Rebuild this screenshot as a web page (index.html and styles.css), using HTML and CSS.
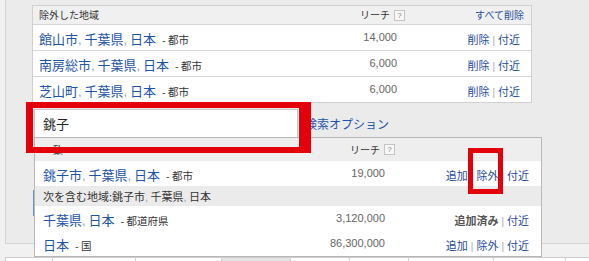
FILE: index.html
```html
<!DOCTYPE html>
<html lang="ja">
<head>
<meta charset="utf-8">
<title>除外した地域</title>
<link rel="stylesheet" href="styles.css">
</head>
<body>
<div class="page">
  <div class="panel">
    <div class="excl">
      <div class="row head">
        <div class="c-name">除外した地域</div>
        <div class="c-reach">リーチ<span class="help">?</span></div>
        <div class="c-act"><a class="link">すべて削除</a></div>
      </div>
      <div class="row item">
        <div class="c-name"><a class="place">館山市<span class="comma">,</span> 千葉県<span class="comma">,</span> 日本</a><span class="type">- 都市</span></div>
        <div class="c-reach num">14,000</div>
        <div class="c-act"><a class="link">削除</a><span class="sep">|</span><a class="link">付近</a></div>
      </div>
      <div class="row item">
        <div class="c-name"><a class="place">南房総市<span class="comma">,</span> 千葉県<span class="comma">,</span> 日本</a><span class="type">- 都市</span></div>
        <div class="c-reach num">6,000</div>
        <div class="c-act"><a class="link">削除</a><span class="sep">|</span><a class="link">付近</a></div>
      </div>
      <div class="row item">
        <div class="c-name"><a class="place">芝山町<span class="comma">,</span> 千葉県<span class="comma">,</span> 日本</a><span class="type">- 都市</span></div>
        <div class="c-reach num">6,000</div>
        <div class="c-act"><a class="link">削除</a><span class="sep">|</span><a class="link">付近</a></div>
      </div>
    </div>
    <div class="search">
      <div class="input">銚子</div>
      <a class="opt">検索オプション</a>
    </div>
    <div class="focus-line"></div>
  </div>
  <div class="tabs">
    <div class="tab w1"></div>
    <div class="tab w2"></div>
    <div class="tab w3"></div>
    <div class="tab w4 sel"></div>
    <div class="tab w5"></div>
    <div class="tab w6"></div>
    <div class="tab w7"></div>
    <div class="tab w8"></div>
    <div class="tab w9"></div>
  </div>

  <div class="dropdown">
    <div class="drow dhead">
      <div class="d-name">一致</div>
      <div class="d-reach">リーチ<span class="help">?</span></div>
      <div class="d-act"></div>
    </div>
    <div class="drow r1">
      <div class="d-name"><a class="place">銚子市<span class="comma">,</span> 千葉県<span class="comma">,</span> 日本</a><span class="type">- 都市</span></div>
      <div class="d-reach num">19,000</div>
      <div class="d-act"><a class="link">追加</a><span class="sep">|</span><a class="link">除外</a><span class="sep">|</span><a class="link">付近</a></div>
    </div>
    <div class="band">次を含む地域:銚子市<span class="comma">,</span> 千葉県<span class="comma">,</span> 日本</div>
    <div class="drow r2">
      <div class="d-name"><a class="place">千葉県<span class="comma">,</span> 日本</a><span class="type">- 都道府県</span></div>
      <div class="d-reach num">3,120,000</div>
      <div class="d-act"><span class="done">追加済み</span><span class="sep">|</span><a class="link">付近</a></div>
    </div>
    <div class="drow r3">
      <div class="d-name"><a class="place">日本</a><span class="type">- 国</span></div>
      <div class="d-reach num">86,300,000</div>
      <div class="d-act"><a class="link">追加</a><span class="sep">|</span><a class="link">除外</a><span class="sep">|</span><a class="link">付近</a></div>
    </div>
  </div>

  <div class="mark mark-input"></div>
  <div class="mark mark-exclude"></div>
</div>
</body>
</html>
```

FILE: styles.css
```css
html, body {
  margin: 0;
  padding: 0;
}
body {
  background: #f1f1f1;
  font-family: "Noto Sans CJK JP", "Liberation Sans", sans-serif;
  color: #333;
}
.page {
  position: relative;
  width: 589px;
  height: 261px;
  overflow: hidden;
}
.panel {
  margin-left: 5px;
  height: 244px;
  box-sizing: border-box;
  border-left: 1px solid #d5d5d5;
  border-bottom: 1px solid #d5d5d5;
  background: #ebebeb;
  padding: 5px 0 0 26px;
}
.excl {
  width: 500px;
  box-sizing: border-box;
  border: 1px solid #d0d0d0;
  background: #fff;
}
.row {
  display: grid;
  grid-template-columns: 1fr 100px 126px;
  align-items: center;
  line-height: 1.2;
}
.head {
  height: 18px;
  background: #f0f0f0;
  font-size: 10px;
  color: #333;
}
.item {
  height: 25px;
  border-top: 1px solid #d6d6d6;
}
.c-name {
  padding-left: 6px;
  white-space: nowrap;
}
.c-reach {
  display: flex;
  justify-content: flex-end;
  align-items: center;
}
.num {
  font-family: "Liberation Sans", sans-serif;
  font-size: 11px;
  color: #666;
}
.item .c-reach {
  padding-right: 8px;
}
.help {
  display: inline-block;
  box-sizing: border-box;
  width: 11px;
  height: 11px;
  margin-left: 4px;
  border: 1px solid #c4c4c4;
  background: #f7f7f7;
  font-family: "Liberation Sans", sans-serif;
  font-size: 8px;
  line-height: 9px;
  text-align: center;
  color: #888;
}
.c-act {
  text-align: right;
  white-space: nowrap;
}
.head .c-act {
  padding-right: 7px;
}
.head .c-act .link {
  font-size: 10px;
}
.item .c-act {
  padding-right: 11px;
}
.link {
  color: #1f4c9c;
  font-size: 11px;
  text-decoration: none;
}
.sep {
  color: #aaa;
  font-family: "Liberation Sans", sans-serif;
  font-size: 10px;
  margin: 0 3px;
}
.place {
  color: #1f55a8;
  font-size: 13px;
  text-decoration: none;
}
.comma {
  color: #8da2c8;
  font-family: "Liberation Sans", sans-serif;
}
.type {
  margin-left: 6px;
  font-size: 10.5px;
  color: #333;
}

.search {
  display: flex;
  align-items: center;
  margin-top: 6px;
}
.input {
  box-sizing: border-box;
  width: 264px;
  height: 29px;
  margin-left: 2px;
  border: 1px solid #c8c8c8;
  background: #fff;
  padding-left: 8px;
  font-size: 13px;
  line-height: 27px;
  color: #222;
}
.opt {
  margin-left: 7px;
  font-size: 12px;
  color: #1f55a8;
  text-decoration: none;
}
.focus-line {
  margin-top: 52px;
  margin-left: 1px;
  width: 0;
  height: 26px;
  border-left: 2px solid #6a8cd0;
}

.tabs {
  display: flex;
  margin-top: 13px;
  margin-left: 5px;
  height: 20px;
  border-top: 1px solid #cccccc;
  border-left: 1px solid #cccccc;
}
.tab {
  flex: none;
  box-sizing: border-box;
  height: 100%;
  background: #fff;
  border-right: 1px solid #d2d2d2;
}
.tab.sel { background: #e4e4e4; }
.w1 { width: 47px; }
.w2 { width: 83px; }
.w3 { width: 86px; }
.w4 { width: 69px; }
.w5 { width: 59px; }
.w6 { width: 59px; }
.w7 { width: 85px; }
.w8 { width: 72px; }
.w9 { width: 40px; border-right: none; }

.dropdown {
  position: absolute;
  left: 34px;
  top: 137px;
  width: 508px;
  height: 120px;
  box-sizing: border-box;
  border: 1px solid #b8b8b8;
  background: #fff;
}
.drow {
  display: grid;
  grid-template-columns: 1fr 140px 146px;
  align-items: center;
  line-height: 1.2;
}
.dhead {
  height: 23px;
  background: #eeeeee;
  font-size: 10px;
  color: #333;
}
.r1 { height: 25px; }
.r2 { height: 26px; }
.r3 { height: 24px; }
.d-name {
  padding-left: 8px;
  white-space: nowrap;
}
.d-reach {
  display: flex;
  justify-content: flex-end;
  align-items: center;
}
.drow .num {
  padding-right: 10px;
}
.d-act {
  text-align: right;
  padding-right: 12px;
  white-space: nowrap;
}
.done {
  font-size: 11px;
  font-weight: bold;
  color: #555;
}
.band {
  height: 20px;
  box-sizing: border-box;
  background: #ebebeb;
  padding-left: 8px;
  font-size: 11px;
  line-height: 20px;
  color: #333;
  white-space: nowrap;
}

.mark {
  position: absolute;
  box-sizing: border-box;
  border-style: solid;
  border-color: #e3000b;
}
.mark-input {
  left: 26px;
  top: 102px;
  width: 285px;
  height: 51px;
  border-width: 6px 12px 6px 7px;
}
.mark-exclude {
  left: 468px;
  top: 148px;
  width: 35px;
  height: 46px;
  border-width: 5px;
}
```
